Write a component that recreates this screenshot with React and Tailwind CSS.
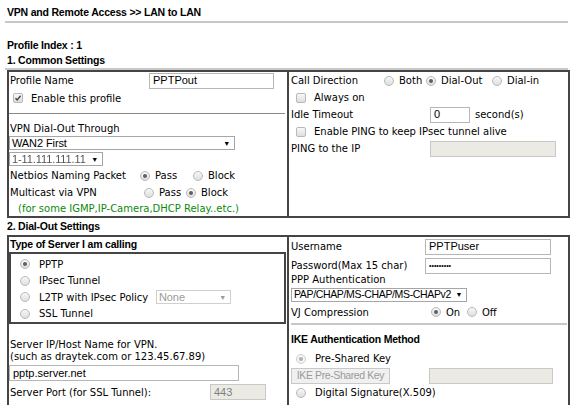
import React from "react";

const LBL = { fontFamily: '"DejaVu Sans", Verdana, sans-serif' };
const ARIAL = { fontFamily: '"Liberation Sans", Arial, sans-serif' };

function Radio({ checked, disabled }) {
  return (
    <span
      className={`inline-flex items-center justify-center w-[10px] h-[10px] rounded-full border shrink-0 ${
        disabled ? "border-[#d0d0d0] bg-[#f4f4f4]" : "border-[#b8b8b8] bg-gradient-to-b from-[#f8f8f8] to-[#dedede]"
      }`}
    >
      {checked && (
        <span className={`w-[4px] h-[4px] rounded-full ${disabled ? "bg-[#b0b0b0]" : "bg-[#606060]"}`} />
      )}
    </span>
  );
}

function Check({ checked }) {
  return (
    <span className="inline-flex items-center justify-center w-[10px] h-[10px] rounded-[2px] border border-[#b8b8b8] bg-gradient-to-b from-[#f8f8f8] to-[#dedede] shrink-0">
      {checked && (
        <svg width="8" height="8" viewBox="0 0 8 8">
          <path d="M1.5 4.2 L3.2 6 L6.6 1.8" stroke="#444" strokeWidth="1.4" fill="none" />
        </svg>
      )}
    </span>
  );
}

function Input({ value, w, disabled, h = "h-[16px]", children }) {
  return (
    <div
      className={`${w} ${h} border flex items-center px-[3px] text-[11px] leading-none overflow-hidden whitespace-nowrap tracking-normal ${
        disabled ? "bg-[#ebebe4] border-[#c8c8c8] text-[#808080]" : "bg-white border-[#b6b6b6] text-black"
      }`}
      style={ARIAL}
    >
      {children || value}
    </div>
  );
}

function Select({ value, w, disabled, blur, size = "text-[11px] tracking-[-0.1px]" }) {
  return (
    <div
      className={`${w} h-[14px] border flex items-center justify-between pl-[2px] pr-[4px] leading-none whitespace-nowrap overflow-hidden ${size} ${
        disabled ? "border-[#cfcfcf] text-[#9a9a9a] bg-white" : "border-[#a6a6a6] text-black bg-white"
      }`}
      style={ARIAL}
    >
      <span className={blur ? "blur-[0.7px] text-[#555]" : ""}>{value}</span>
      <span className={`text-[7px] ml-[3px] shrink-0 ${disabled ? "text-[#999]" : "text-black"}`}>▼</span>
    </div>
  );
}

export default function App() {
  return (
    <div className="w-[574px] h-[405px] overflow-hidden bg-white text-black relative">
      <div style={ARIAL} className="font-bold text-[10.5px] tracking-[-0.2px] pl-[7px] pt-[6px] h-[21px] leading-[12px]">
        VPN and Remote Access &gt;&gt; LAN to LAN
      </div>
      <div className="ml-[5px] w-[563px] h-[2px] bg-[#c8c8c8]" />
      <div className="h-[14px]" />
      <div style={ARIAL} className="font-bold text-[10.5px] tracking-[-0.2px] pl-[7px] h-[16px] leading-[16px]">
        Profile Index : 1
      </div>
      <div style={ARIAL} className="font-bold text-[10.5px] tracking-[-0.2px] pl-[7px] h-[15px] leading-[15px]">
        1. Common Settings
      </div>
      <div className="ml-[5px] w-[563px] h-[2px] bg-[#c8c8c8]" />

      {/* Table 1 */}
      <div style={LBL} className="ml-[7px] w-[563px] h-[148px] border-2 border-[#454545] grid grid-cols-[278px_1fr] text-[10px] whitespace-nowrap">
        <div className="flex flex-col">
          <div className="h-[17px] flex items-center pl-[1px]">
            <span className="w-[139px]">Profile Name</span>
            <Input w="w-[125px]" value="PPTPout" />
          </div>
          <div className="h-[18px] flex items-center pl-[4px] gap-[8px]">
            <Check checked />
            <span>Enable this profile</span>
          </div>
          <div className="h-[6px]" />
          <div className="h-[1px] bg-[#8a8a8a] mr-[2px]" />
          <div className="h-[7px]" />
          <div className="h-[14px] flex items-center pl-[1px]">VPN Dial-Out Through</div>
          <div className="h-[16px] flex items-center">
            <Select w="w-[226px]" value="WAN2 First" />
          </div>
          <div className="h-[16px] flex items-center">
            <Select w="w-[94px]" value="1-11.111.111.11" blur />
          </div>
          <div className="h-[17px] flex items-center pl-[1px]">
            <span className="w-[130px]">Netbios Naming Packet</span>
            <Radio checked />
            <span className="ml-[5px] w-[38px]">Pass</span>
            <Radio />
            <span className="ml-[5px]">Block</span>
          </div>
          <div className="h-[17px] flex items-center pl-[1px]">
            <span className="w-[134px]">Multicast via VPN</span>
            <Radio />
            <span className="ml-[5px] w-[27px]">Pass</span>
            <Radio checked />
            <span className="ml-[5px]">Block</span>
          </div>
          <div className="h-[15px] flex items-center pl-[9px] text-[#0c8a0c]">
            (for some IGMP,IP-Camera,DHCP Relay..etc.)
          </div>
        </div>
        <div className="border-l-2 border-[#454545] flex flex-col pl-[2px]">
          <div className="h-[17px] flex items-center">
            <span className="w-[93px]">Call Direction</span>
            <Radio />
            <span className="ml-[5px] w-[27px]">Both</span>
            <Radio checked />
            <span className="ml-[5px] w-[51px]">Dial-Out</span>
            <Radio />
            <span className="ml-[5px]">Dial-in</span>
          </div>
          <div className="h-[17px] flex items-center pl-[5px] gap-[8px]">
            <Check />
            <span>Always on</span>
          </div>
          <div className="h-[17px] flex items-center">
            <span className="w-[139px]">Idle Timeout</span>
            <Input w="w-[40px]" value="0" />
            <span className="ml-[5px]">second(s)</span>
          </div>
          <div className="h-[17px] flex items-center pl-[5px] gap-[8px]">
            <Check />
            <span>Enable PING to keep IPsec tunnel alive</span>
          </div>
          <div className="h-[17px] flex items-center">
            <span className="w-[139px]">PING to the IP</span>
            <Input w="w-[126px]" disabled value="" />
          </div>
        </div>
      </div>

      <div style={ARIAL} className="font-bold text-[10.5px] tracking-[-0.2px] pl-[7px] h-[17px] leading-[17px]">
        2. Dial-Out Settings
      </div>

      {/* Table 2 */}
      <div style={LBL} className="ml-[7px] w-[563px] h-[200px] border-2 border-[#454545] grid grid-cols-[278px_1fr] text-[10px] whitespace-nowrap">
        <div className="flex flex-col">
          <div style={ARIAL} className="h-[15px] flex items-center pl-[1px] font-bold text-[10.5px] tracking-[-0.2px]">
            Type of Server I am calling
          </div>
          <div className="h-[72px] border-2 border-[#454545] mr-[1px] flex flex-col pt-[2px] pl-[9px]">
            <div className="h-[17px] flex items-center gap-[9px]">
              <Radio checked />
              <span>PPTP</span>
            </div>
            <div className="h-[17px] flex items-center gap-[9px]">
              <Radio />
              <span>IPsec Tunnel</span>
            </div>
            <div className="h-[17px] flex items-center">
              <Radio />
              <span className="ml-[9px] w-[117px]">L2TP with IPsec Policy</span>
              <Select w="w-[75px]" value="None" disabled />
            </div>
            <div className="h-[17px] flex items-center gap-[9px]">
              <Radio />
              <span>SSL Tunnel</span>
            </div>
          </div>
          <div className="h-[14px]" />
          <div className="h-[12px] flex items-center pl-[1px]">Server IP/Host Name for VPN.</div>
          <div className="h-[12px] flex items-center pl-[1px]">(such as draytek.com or 123.45.67.89)</div>
          <div className="h-[3px]" />
          <Input w="w-[230px]" h="h-[16px]" value="pptp.server.net" />
          <div className="h-[18px] mt-[2px] flex items-center pl-[1px]">
            <span className="w-[200px]">Server Port (for SSL Tunnel):</span>
            <Input w="w-[56px]" disabled value="443" />
          </div>
        </div>
        <div className="border-l-2 border-[#454545] flex flex-col pl-[2px]">
          <div className="h-[19px] flex items-center">
            <span className="w-[134px]">Username</span>
            <Input w="w-[126px]" value="PPTPuser" />
          </div>
          <div className="h-[19px] flex items-center">
            <span className="w-[134px]">Password(Max 15 char)</span>
            <Input w="w-[126px]">
              <span className="text-[7px] tracking-[0px]">•••••••••</span>
            </Input>
          </div>
          <div className="h-[12px] flex items-end">PPP Authentication</div>
          <div className="h-[15px] flex items-center">
            <Select w="w-[176px]" value="PAP/CHAP/MS-CHAP/MS-CHAPv2" size="text-[10.5px] tracking-[-0.35px]" />
          </div>
          <div className="h-[20px] flex items-center">
            <span className="w-[140px]">VJ Compression</span>
            <Radio checked />
            <span className="ml-[5px] w-[21px]">On</span>
            <Radio />
            <span className="ml-[5px]">Off</span>
          </div>
          <div className="h-[2px] mt-[1px] bg-[#c8c8c8] mr-[1px]" />
          <div style={ARIAL} className="h-[25px] flex items-end pb-[2px] font-bold text-[10.5px] tracking-[-0.2px]">
            IKE Authentication Method
          </div>
          <div className="h-[17px] flex items-center pl-[5px] gap-[9px]">
            <Radio checked disabled />
            <span>Pre-Shared Key</span>
          </div>
          <div className="h-[17px] flex items-center">
            <div
              style={ARIAL}
              className="w-[99px] h-[16px] border border-[#c8c8c8] bg-[#f0f0f0] text-[#9a9a9a] text-[10.5px] flex items-center justify-center tracking-[-0.4px] overflow-hidden"
            >
              IKE Pre-Shared Key
            </div>
            <div className="w-[39px]" />
            <Input w="w-[124px]" disabled value="" />
          </div>
          <div className="h-[17px] flex items-center pl-[5px] gap-[9px]">
            <Radio />
            <span>Digital Signature(X.509)</span>
          </div>
          <div className="h-[30px] flex items-start pt-[5px] pl-[138px]">
            <div className="w-[110px] h-[14px] border border-[#a6a6a6] bg-white" />
          </div>
        </div>
      </div>
    </div>
  );
}
